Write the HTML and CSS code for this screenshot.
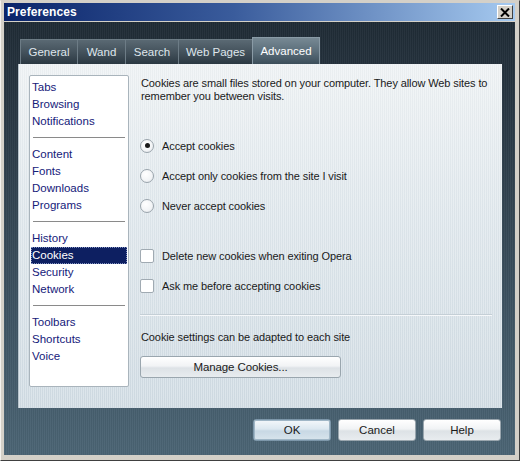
FILE: index.html
```html
<!DOCTYPE html>
<html>
<head>
<meta charset="utf-8">
<link rel="stylesheet" href="styles.css">
</head>
<body>
<div class="window">
  <div class="titlebar">
    <span class="title">Preferences</span>
    <span class="close"><svg width="10" height="9" viewBox="0 0 10 9"><path d="M1 0.5 L9 8.5 M9 0.5 L1 8.5" stroke="#000" stroke-width="2"/></svg></span>
  </div>
  <div class="client">
    <div class="tabs">
      <div class="tab t-general">General</div>
      <div class="tab t-wand">Wand</div>
      <div class="tab t-search">Search</div>
      <div class="tab t-web">Web Pages</div>
      <div class="tab active t-adv">Advanced</div>
    </div>
    <div class="panel">
      <div class="list">
        <div class="item">Tabs</div>
        <div class="item">Browsing</div>
        <div class="item">Notifications</div>
        <div class="sep"></div>
        <div class="item">Content</div>
        <div class="item">Fonts</div>
        <div class="item">Downloads</div>
        <div class="item">Programs</div>
        <div class="sep"></div>
        <div class="item">History</div>
        <div class="item selected">Cookies</div>
        <div class="item">Security</div>
        <div class="item">Network</div>
        <div class="sep"></div>
        <div class="item">Toolbars</div>
        <div class="item">Shortcuts</div>
        <div class="item">Voice</div>
      </div>
      <div class="content">
        <p class="intro">Cookies are small files stored on your computer. They allow Web sites to remember you between visits.</p>
        <div class="options">
          <div class="opt"><span class="radio checked"></span><span>Accept cookies</span></div>
          <div class="opt"><span class="radio"></span><span>Accept only cookies from the site I visit</span></div>
          <div class="opt"><span class="radio"></span><span>Never accept cookies</span></div>
        </div>
        <div class="checks">
          <div class="opt"><span class="check"></span><span>Delete new cookies when exiting Opera</span></div>
          <div class="opt"><span class="check"></span><span>Ask me before accepting cookies</span></div>
        </div>
        <div class="hr"></div>
        <p class="note">Cookie settings can be adapted to each site</p>
        <div class="btn manage">Manage Cookies...</div>
      </div>
    </div>
    <div class="buttons">
      <div class="btn default b-ok">OK</div>
      <div class="btn b-cancel">Cancel</div>
      <div class="btn b-help">Help</div>
    </div>
  </div>
</div>
</body>
</html>
```

FILE: styles.css
```css
* { box-sizing: border-box; }
html, body { margin: 0; padding: 0; }
body {
  width: 520px;
  height: 461px;
  font-family: "Liberation Sans", Arial, sans-serif;
  font-size: 11px;
  overflow: hidden;
}
.window {
  width: 520px;
  height: 461px;
  background: #d4d0c8;
  border-top: 1px solid #d4d0c8;
  border-left: 1px solid #f4f2ee;
  border-right: 1px solid #404040;
  border-bottom: 1px solid #404040;
  padding: 2px 4px 5px 3px;
  display: flex;
  flex-direction: column;
}
.titlebar {
  height: 18px;
  background: linear-gradient(90deg, #0a246a 0%, #3a5c9c 45%, #a6caf0 100%);
  display: flex;
  align-items: center;
  justify-content: space-between;
  padding: 0 2px 0 3px;
  flex: none;
}
.title {
  color: #fff;
  font-weight: bold;
  font-size: 12px;
  letter-spacing: 0.1px;
}
.close {
  width: 16px;
  height: 14px;
  background: #d4d0c8;
  border-top: 1px solid #fff;
  border-left: 1px solid #fff;
  border-right: 1px solid #404040;
  border-bottom: 1px solid #404040;
  display: flex;
  align-items: center;
  justify-content: center;
}
.client {
  flex: 1;
  margin-top: 1px;
  background:
    repeating-linear-gradient(90deg, rgba(255,255,255,0.035) 0 1px, rgba(0,0,0,0.035) 1px 2px),
    linear-gradient(180deg, #1f2b35 0%, #2d3d4a 30%, #3f5564 70%, #4b6474 100%);
  display: flex;
  flex-direction: column;
  padding: 15px 13px 0 14px;
}
.tabs {
  display: flex;
  align-items: flex-end;
  height: 27px;
  padding-left: 2px;
}
.tab {
  height: 25px;
  color: #dfe6ec;
  font-size: 11.5px;
  display: flex;
  align-items: center;
  justify-content: center;
  background: linear-gradient(180deg, #5a6973 0%, #44525c 50%, #2b3842 100%);
  border: 1px solid #6d7c86;
  border-bottom: none;
  border-right: none;
}
.t-general { width: 57px; }
.t-wand { width: 48px; }
.t-search { width: 53px; }
.t-web { width: 74px; }
.t-adv { width: 68px; }
.tab.active {
  height: 27px;
  color: #fff;
  background: linear-gradient(180deg, #778994 0%, #5c6f7b 50%, #3c4e5a 100%);
  border: 1px solid #8a9ba6;
  border-bottom: none;
}
.panel {
  height: 344px;
  background:
    repeating-linear-gradient(90deg, rgba(255,255,255,0.25) 0 1px, rgba(0,0,0,0.012) 1px 2px),
    linear-gradient(180deg, #eef2f4 0%, #e0e8ed 40%, #cfdbe3 100%);
  border-left: 1px solid #b8c4cc;
  display: flex;
  padding: 11px 10px 21px 10px;
  gap: 11px;
}
.list {
  width: 100px;
  height: 312px;
  background: #fff;
  border: 1px solid #a9b4bc;
  border-radius: 2px;
  padding: 3px 1px;
  flex: none;
  font-size: 11.5px;
}
.item {
  height: 17px;
  line-height: 17px;
  color: #15207a;
  padding-left: 1px;
}
.item.selected {
  background: #0d1f61;
  color: #fff;
  outline: 1px dotted #8090c0;
  outline-offset: -1px;
}
.sep {
  height: 1px;
  background: #8a8a8a;
  margin: 7px 2px 8px 2px;
}
.content {
  flex: 1;
  min-width: 0;
  color: #1a1a1a;
  font-size: 11px;
  letter-spacing: -0.1px;
}
.intro {
  margin: 2px 0 0 1px;
  line-height: 13px;
}
.options {
  margin-top: 34px;
  display: flex;
  flex-direction: column;
  gap: 13px;
}
.checks {
  margin-top: 33px;
  display: flex;
  flex-direction: column;
  gap: 13px;
}
.opt {
  display: flex;
  align-items: center;
  height: 17px;
  gap: 8px;
}
.radio {
  width: 14px;
  height: 14px;
  border-radius: 50%;
  border: 1px solid #9aa4ac;
  background: radial-gradient(circle at 40% 35%, #ffffff 0%, #f2f4f6 60%, #dde2e6 100%);
  display: flex;
  align-items: center;
  justify-content: center;
  flex: none;
}
.radio.checked::after {
  content: "";
  width: 5px;
  height: 5px;
  border-radius: 50%;
  background: #1a1a1a;
}
.check {
  width: 14px;
  height: 14px;
  border: 1px solid #a0aab2;
  border-radius: 2px;
  background: #fff;
  flex: none;
}
.hr {
  height: 1px;
  background: #f6f8fa;
  border-top: 1px solid #c4cfd6;
  box-sizing: content-box;
  margin: 20px 0 0 0;
}
.note {
  margin: 13px 0 0 1px;
  line-height: 17px;
}
.btn {
  height: 22px;
  display: flex;
  align-items: center;
  justify-content: center;
  font-size: 11.5px;
  color: #1a1a1a;
  background: linear-gradient(180deg, #ffffff 0%, #f1f3f5 45%, #dde2e6 55%, #e8ecef 100%);
  border: 1px solid #9aa6ae;
  border-radius: 3px;
}
.manage {
  width: 201px;
  margin-top: 10px;
}
.buttons {
  display: flex;
  justify-content: flex-end;
  margin-top: 11px;
  padding-right: 1px;
}
.b-ok { width: 78px; margin-right: 7px; }
.b-cancel { width: 78px; margin-right: 7px; }
.b-help { width: 78px; }
.btn.default {
  background: linear-gradient(180deg, #f4f8fb 0%, #dce8f0 45%, #c8d8e4 55%, #d8e4ec 100%);
  border: 1px solid #7d97aa;
  box-shadow: 0 0 0 1px #9fb6c6 inset;
}
```
